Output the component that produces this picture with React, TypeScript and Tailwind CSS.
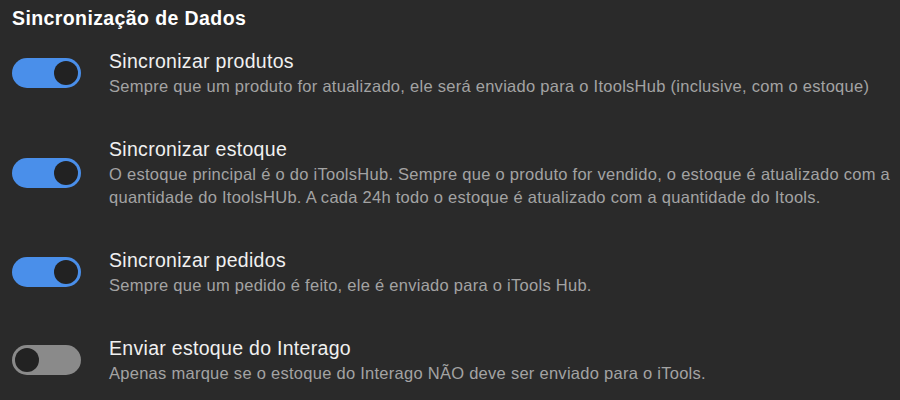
import React from "react";

type Item = { title: string; desc: string; on: boolean };

const items: Item[] = [
  {
    title: "Sincronizar produtos",
    desc: "Sempre que um produto for atualizado, ele será enviado para o ItoolsHub (inclusive, com o estoque)",
    on: true,
  },
  {
    title: "Sincronizar estoque",
    desc: "O estoque principal é o do iToolsHub. Sempre que o produto for vendido, o estoque é atualizado com a quantidade do ItoolsHUb. A cada 24h todo o estoque é atualizado com a quantidade do Itools.",
    on: true,
  },
  {
    title: "Sincronizar pedidos",
    desc: "Sempre que um pedido é feito, ele é enviado para o iTools Hub.",
    on: true,
  },
  {
    title: "Enviar estoque do Interago",
    desc: "Apenas marque se o estoque do Interago NÃO deve ser enviado para o iTools.",
    on: false,
  },
];

function Toggle({ on }: { on: boolean }) {
  return (
    <div
      className={
        on
          ? "flex h-[30px] w-[69px] shrink-0 items-center justify-end rounded-full bg-[#4a8fea] px-[3px]"
          : "flex h-[30px] w-[69px] shrink-0 items-center justify-start rounded-full bg-[#8a8a8a] px-[3px]"
      }
    >
      <div className="h-[24px] w-[24px] rounded-full bg-[#222222]" />
    </div>
  );
}

export default function App() {
  return (
    <div
      className="h-[400px] w-[900px] overflow-hidden bg-[#2a2a2a] pl-[12px] pr-[8px]"
      style={{ fontFamily: '"Liberation Sans", Arial, sans-serif' }}
    >
      <h1 className="pt-[5px] text-[19.5px] font-bold leading-[26px] tracking-[0.4px] text-white">
        Sincronização de Dados
      </h1>
      <div className="mt-[17px] flex flex-col gap-[38px]">
        {items.map((it) => (
          <div key={it.title} className="flex items-center gap-[28px]">
            <Toggle on={it.on} />
            <div className="flex flex-col">
              <div className="text-[19.5px] leading-[27px] tracking-[0.3px] text-[#f0f0f0]">{it.title}</div>
              <div className="text-[16.5px] leading-[23px] tracking-[0.27px] text-[#a3a3a3]">{it.desc}</div>
            </div>
          </div>
        ))}
      </div>
    </div>
  );
}
